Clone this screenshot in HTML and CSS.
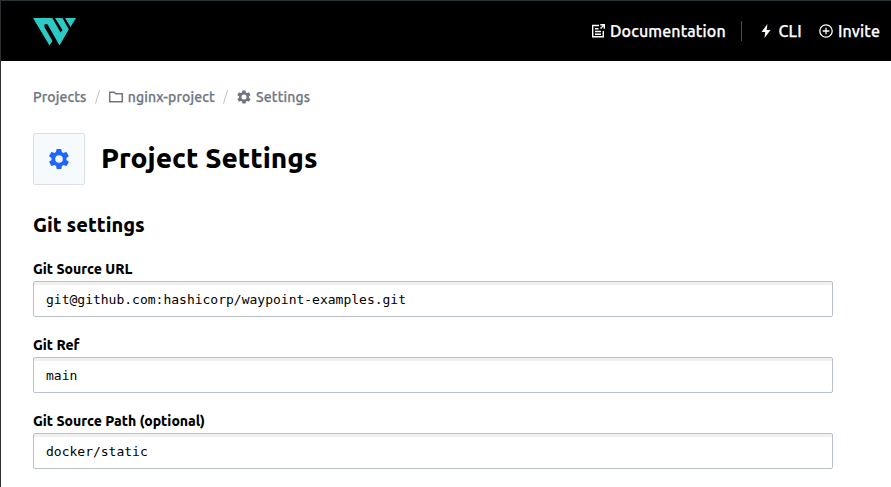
FILE: index.html
```html
<!DOCTYPE html>
<html lang="en">
<head>
<meta charset="utf-8">
<title>Project Settings</title>
<link rel="stylesheet" href="styles.css">
</head>
<body>
<svg class="sprite" aria-hidden="true">
  <symbol id="gear" viewBox="0 0 24 24"><path d="M19.4 13a7.800 7.800 0 0 0 0-2l2.100-1.600a.5.5 0 0 0 .1-.6l-2-3.500a.5.5 0 0 0-.6-.2l-2.500 1a7.400 7.400 0 0 0-1.700-1l-.4-2.600a.5.5 0 0 0-.5-.4h-4a.5.5 0 0 0-.5.4L9 5.100a7.700 7.700 0 0 0-1.700 1l-2.500-1a.5.5 0 0 0-.6.2l-2 3.500a.5.5 0 0 0 .1.6L4.500 11a7.900 7.900 0 0 0 0 2l-2.100 1.600a.5.5 0 0 0-.1.6l2 3.500c.1.200.4.300.6.200l2.500-1c.5.400 1.100.700 1.700 1l.4 2.600c0 .2.200.4.5.4h4c.3 0 .5-.2.500-.4l.4-2.600a7.300 7.300 0 0 0 1.700-1l2.500 1c.2.100.5 0 .6-.2l2-3.500a.5.500 0 0 0-.1-.6zM12 15.800a3.800 3.800 0 1 1 0-7.600 3.800 3.800 0 0 1 0 7.600z" fill="currentColor"/></symbol>
</svg>
<header class="topbar">
  <svg class="logo" viewBox="0 0 44 28"><path d="M0 0h19.300L27.600 14.500l1.900-2.500L22 0h7.500l6.300 11.500-9.300 16L14.500 6.300h-3v3l8 13.700-3 4.500zM32 0h11l-5.500 9z" fill="#2cc9c5"/></svg>
  <nav class="nav">
    <a class="nav-link docs"><svg class="icon" viewBox="0 0 16 16" fill="none" stroke="currentColor" stroke-width="1.400"><path d="M9 2.500H2.700v11.300h10.600V8M5 5.800h3.500M5 8.500h6M5 11.200h6M10.300 1.700h4V5.700M14 2l-3.500 3.500"/></svg><span>Documentation</span></a>
    <a class="nav-link cli"><svg class="icon" viewBox="0 0 16 16"><path d="M9.500 1L3.500 9h3.700l-.7 6 6-8H8.700z" fill="currentColor"/></svg><span>CLI</span></a>
    <a class="nav-link invite"><svg class="icon" viewBox="0 0 16 16" fill="none" stroke="currentColor" stroke-width="1.300"><circle cx="8" cy="8" r="6.200"/><path d="M8 4.700v6.600M4.700 8h6.600"/></svg><span>Invite</span></a>
  </nav>
</header>
<main class="page">
  <nav class="crumbs">
    <span>Projects</span><i class="slash"></i>
    <svg class="icon" viewBox="0 0 16 16" fill="none" stroke="currentColor" stroke-width="1.500"><path d="M1.700 3.300h4.500l1.500 1.500h6.600v7.900H1.700z"/></svg><span>nginx-project</span><i class="slash"></i>
    <svg class="icon"><use href="#gear"/></svg><span>Settings</span>
  </nav>
  <div class="title">
    <div class="tile"><svg><use href="#gear"/></svg></div>
    <h1>Project Settings</h1>
  </div>
  <h2>Git settings</h2>
  <form>
    <label class="field"><span>Git Source URL</span><input value="git@github.com:hashicorp/waypoint-examples.git"></label>
    <label class="field"><span>Git Ref</span><input value="main"></label>
    <label class="field"><span>Git Source Path (optional)</span><input value="docker/static"></label>
  </form>
</main>
</body>
</html>
```
FILE: styles.css
```css
* { box-sizing: border-box; }
body {
  margin: 0;
  height: 487px;
  overflow: hidden;
  border-left: 1px solid #2c2f31;
  background: #fff;
  color: #000;
  font-family: Ubuntu, "Noto Sans", sans-serif;
}
.sprite { display: none; }
.topbar {
  height: 61px;
  border-top: 1px solid #2c3336;
  padding: 0 11px 0 32px;
  display: flex;
  align-items: center;
  justify-content: space-between;
  background: #000;
  color: #fff;
}
.logo { width: 44px; height: 28px; display: block; margin-top: 2px; }
.nav { display: flex; align-items: center; }
.nav-link {
  display: flex;
  align-items: center;
  height: 20px;
  font-size: 16px;
  font-weight: 500;
  letter-spacing: 0.13px;
  -webkit-text-stroke: 0.25px currentColor;
  white-space: nowrap;
}
.icon { width: 16px; height: 16px; flex: none; display: block; }
.nav-link .icon { margin-right: 4px; }
.docs span { width: 115px; }
.cli { border-left: 1px solid #454a54; margin-left: 16px; padding-left: 16px; }
.nav-link.cli .icon { margin-right: 4.500px; }
.cli span { width: 23px; }
.invite { margin-left: 16.500px; }
.invite span { width: 42px; }
.page { padding: 26px 58px 0 32px; }
.crumbs {
  display: flex;
  align-items: center;
  height: 20px;
  color: #6f7682;
  font-size: 14px;
  font-weight: 500;
  letter-spacing: 0.13px;
  -webkit-text-stroke: 0.25px currentColor;
}
.crumbs .icon { margin-right: 4.300px; }
.slash { width: 1px; height: 14px; margin: 0 10px; background: #bac1cc; transform: rotate(17deg); }
.title { display: flex; align-items: center; gap: 16px; margin-top: 26px; }
.tile {
  width: 52px;
  height: 52px;
  display: grid;
  place-items: center;
  background: #f7fafd;
  border: 1px solid #dce0e6;
  border-radius: 2px;
}
.tile svg { width: 24px; height: 24px; color: #1f66ff; }
h1 { margin: 0; padding-bottom: 2px; font-size: 28px; line-height: 36px; font-weight: 800; }
h2 { margin: 26px 0 0; font-size: 20px; line-height: 28px; font-weight: 800; }
form { margin-top: 20px; }
.field { display: block; height: 76px; font-size: 14px; font-weight: 800; line-height: 20px; }
.field span { display: block; height: 22px; white-space: nowrap; }
.field input {
  display: block;
  width: 800px;
  height: 36px;
  padding: 0 12px;
  border: 1px solid #bac1cc;
  border-radius: 2px;
  box-shadow: inset 0 3px 0 #f0f0f1;
  background: #fff;
  color: #000;
  font: 13px "DejaVu Sans Mono", monospace;
}
```
